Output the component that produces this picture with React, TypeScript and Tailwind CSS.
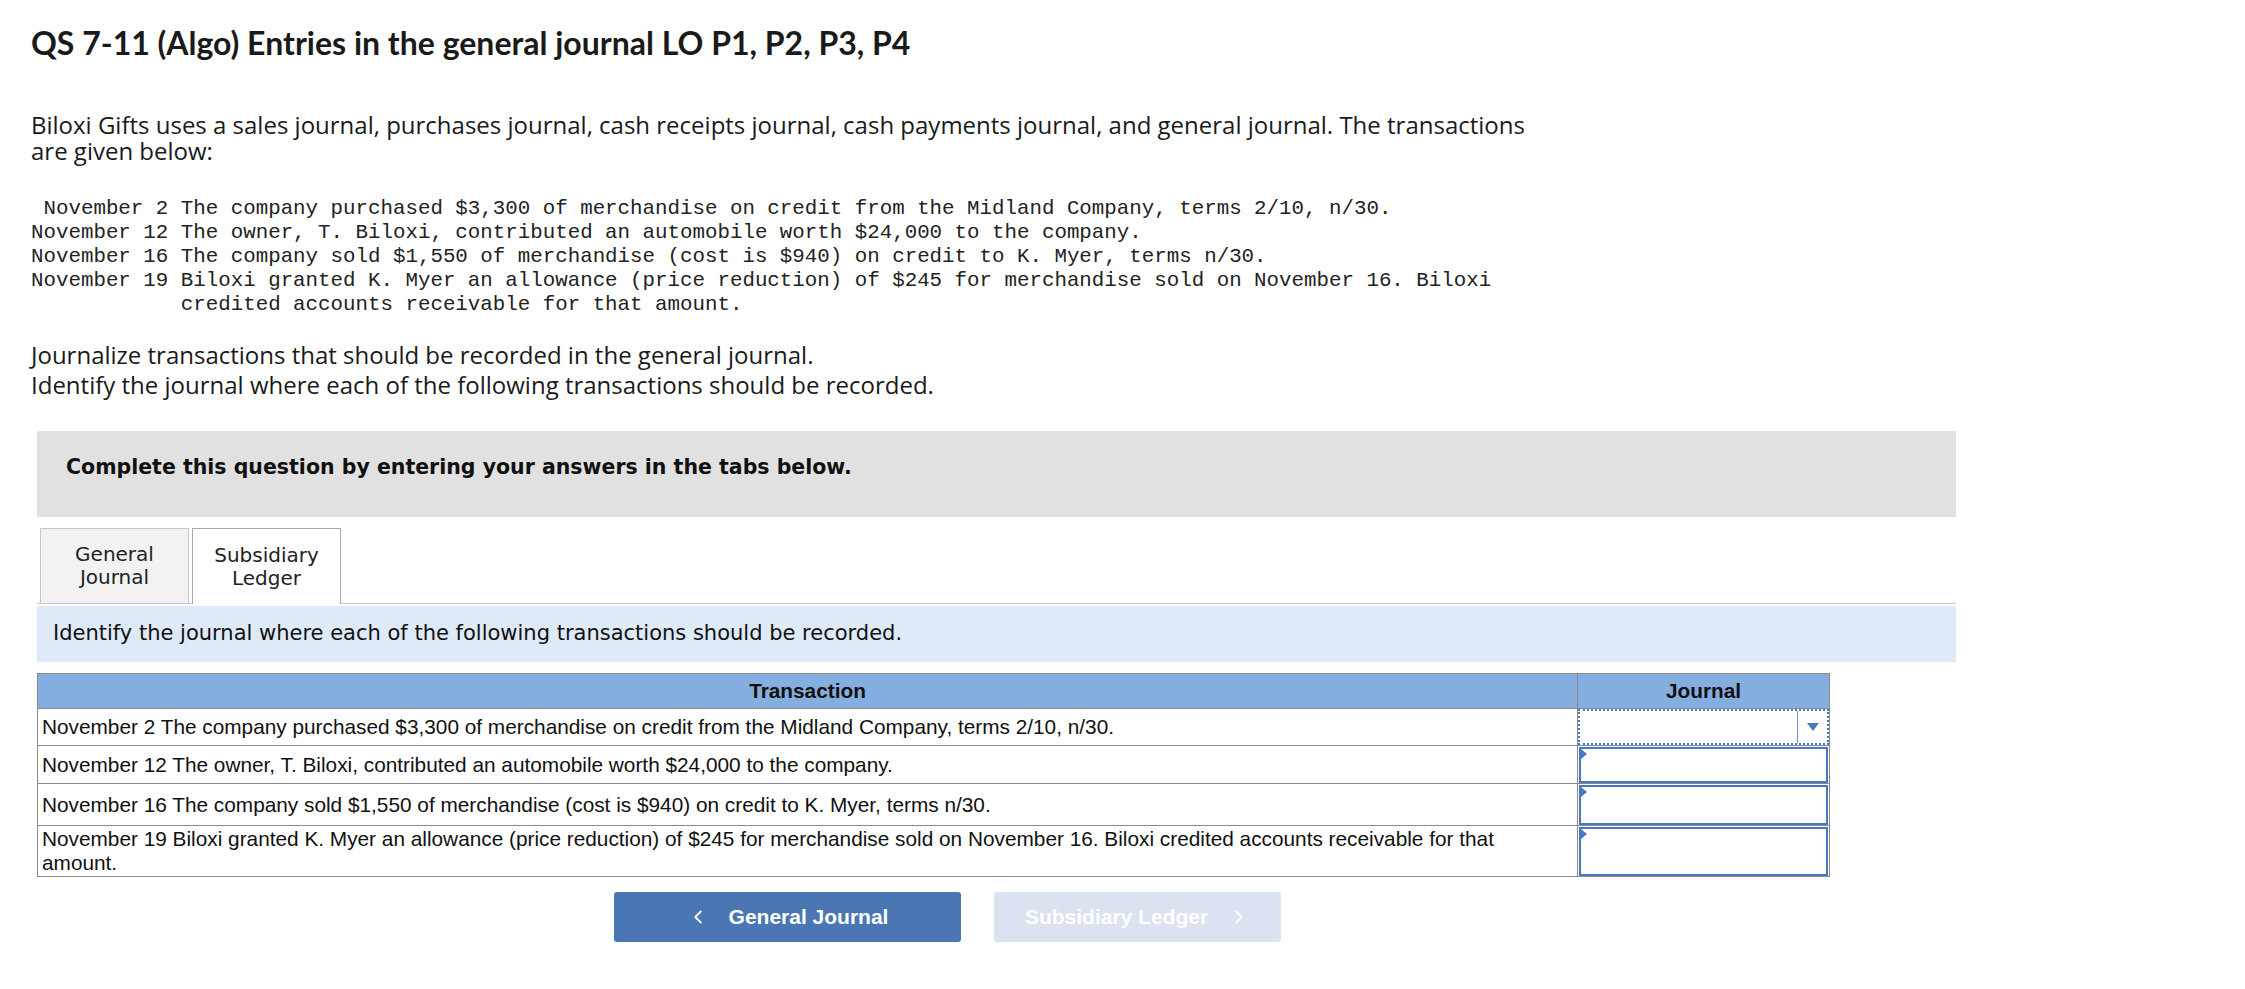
import { ChevronLeft, ChevronRight } from 'lucide-react'

const rows = [
  'November 2 The company purchased $3,300 of merchandise on credit from the Midland Company, terms 2/10, n/30.',
  'November 12 The owner, T. Biloxi, contributed an automobile worth $24,000 to the company.',
  'November 16 The company sold $1,550 of merchandise (cost is $940) on credit to K. Myer, terms n/30.',
  'November 19 Biloxi granted K. Myer an allowance (price reduction) of $245 for merchandise sold on November 16. Biloxi credited accounts receivable for that amount.',
]

const rowHeights = ['h-[36px]', 'h-[36px]', 'h-[40px]', 'h-[49px]']

const entries = [
  ['November 2', 'The company purchased $3,300 of merchandise on credit from the Midland Company, terms 2/10, n/30.'],
  ['November 12', 'The owner, T. Biloxi, contributed an automobile worth $24,000 to the company.'],
  ['November 16', 'The company sold $1,550 of merchandise (cost is $940) on credit to K. Myer, terms n/30.'],
  ['November 19', 'Biloxi granted K. Myer an allowance (price reduction) of $245 for merchandise sold on November 16. Biloxi credited accounts receivable for that amount.'],
]

function JournalCell({ index }: { index: number }) {
  if (index === 0) {
    return (
      <div className="h-full border-2 border-dotted border-[#4a78c0] flex">
        <div className="flex-1" />
        <div className="w-[30px] border-l border-[#6d93cc] flex items-center justify-center">
          <svg width="12" height="8" viewBox="0 0 12 8">
            <path d="M0 0 L12 0 L6 8 Z" fill="#4a78c0" />
          </svg>
        </div>
      </div>
    )
  }

  return (
    <div className="relative h-full border-2 border-[#4a78c0] m-[1px]">
      <svg
        width="6"
        height="10"
        viewBox="0 0 6 10"
        className="absolute left-0 top-0"
      >
        <path d="M0 0 L6 5 L0 10 Z" fill="#4a78c0" />
      </svg>
    </div>
  )
}

export default function App() {
  return (
    <div className="min-h-screen bg-white text-[#1a1a1a] pl-[31px] pt-[24px]">
      <h1 className="font-['Lato',sans-serif] font-bold text-[32px] leading-[38px]">
        QS 7-11 (Algo) Entries in the general journal LO P1, P2, P3, P4
      </h1>

      <p className="mt-[50px] w-[1510px] font-['Open_Sans',sans-serif] text-[24px] leading-[26px]">
        Biloxi Gifts uses a sales journal, purchases journal, cash receipts
        journal, cash payments journal, and general journal. The transactions
        are given below:
      </p>

      <div className="mt-[33px] grid grid-cols-[max-content_1fr] gap-x-[12.5px] w-[1490px] font-['Liberation_Mono',monospace] text-[20.8px] leading-[24px] text-[#222]">
        {entries.map(([date, text]) => (
          <div key={date} className="contents">
            <div className="text-right">{date}</div>
            <div className="w-[1350px]">{text}</div>
          </div>
        ))}
      </div>

      <div className="mt-[23px] font-['Open_Sans',sans-serif] text-[24px] leading-[30px]">
        <p>Journalize transactions that should be recorded in the general journal.</p>
        <p>Identify the journal where each of the following transactions should be recorded.</p>
      </div>

      <div className="ml-[6px] mt-[31px] w-[1919px]">
        <div className="h-[86px] bg-[#e1e1e1] pl-[29px] pt-[21px] font-['DejaVu_Sans',sans-serif] font-bold text-[20.5px] text-[#111]">
          Complete this question by entering your answers in the tabs below.
        </div>

        <div className="mt-[11px] flex items-end gap-[3px] border-b border-[#c8c8c8] pl-[3px] font-['DejaVu_Sans',sans-serif] text-[20px] leading-[23px] text-[#222]">
          <div className="w-[149px] h-[75px] bg-[#f2f2f2] border border-b-0 border-[#c8c8c8] flex items-center justify-center text-center">
            General
            <br />
            Journal
          </div>
          <div className="w-[149px] h-[76px] -mb-px bg-white border border-b-0 border-[#a8a8a8] flex items-center justify-center text-center">
            Subsidiary
            <br />
            Ledger
          </div>
        </div>

        <div className="mt-[2px] h-[56px] bg-[#deeaf7] pl-[16px] flex items-center font-['DejaVu_Sans',sans-serif] text-[21px] text-[#111]">
          Identify the journal where each of the following transactions should be recorded.
        </div>

        <table className="mt-[11px] w-[1793px] border-collapse font-['Liberation_Sans',sans-serif] text-[20.8px] leading-[24px] text-[#111]">
          <thead>
            <tr className="h-[35px] bg-[#85aee0]">
              <th className="border border-[#8a8a8a] font-bold">Transaction</th>
              <th className="w-[252px] border border-[#8a8a8a] font-bold">Journal</th>
            </tr>
          </thead>
          <tbody>
            {rows.map((row, i) => (
              <tr key={i} className={rowHeights[i]}>
                <td className="border border-[#8a8a8a] px-[4px] align-middle">
                  {row}
                </td>
                <td className="border border-[#8a8a8a] p-0">
                  <div className={rowHeights[i]}>
                    <JournalCell index={i} />
                  </div>
                </td>
              </tr>
            ))}
          </tbody>
        </table>

        <div className="mt-[15px] ml-[577px] flex gap-[33px] font-['Liberation_Sans',sans-serif] font-bold text-[21px]">
          <button className="w-[347px] h-[50px] rounded-[3px] bg-[#4a77b4] text-white flex items-center justify-center gap-[20px]">
            <ChevronLeft size={22} strokeWidth={2} />
            <span>General Journal</span>
          </button>
          <button className="w-[287px] h-[50px] rounded-[3px] bg-[#dae3ef] text-white flex items-center justify-center gap-[20px]">
            <span>Subsidiary Ledger</span>
            <ChevronRight size={22} strokeWidth={2} />
          </button>
        </div>
      </div>
    </div>
  )
}
